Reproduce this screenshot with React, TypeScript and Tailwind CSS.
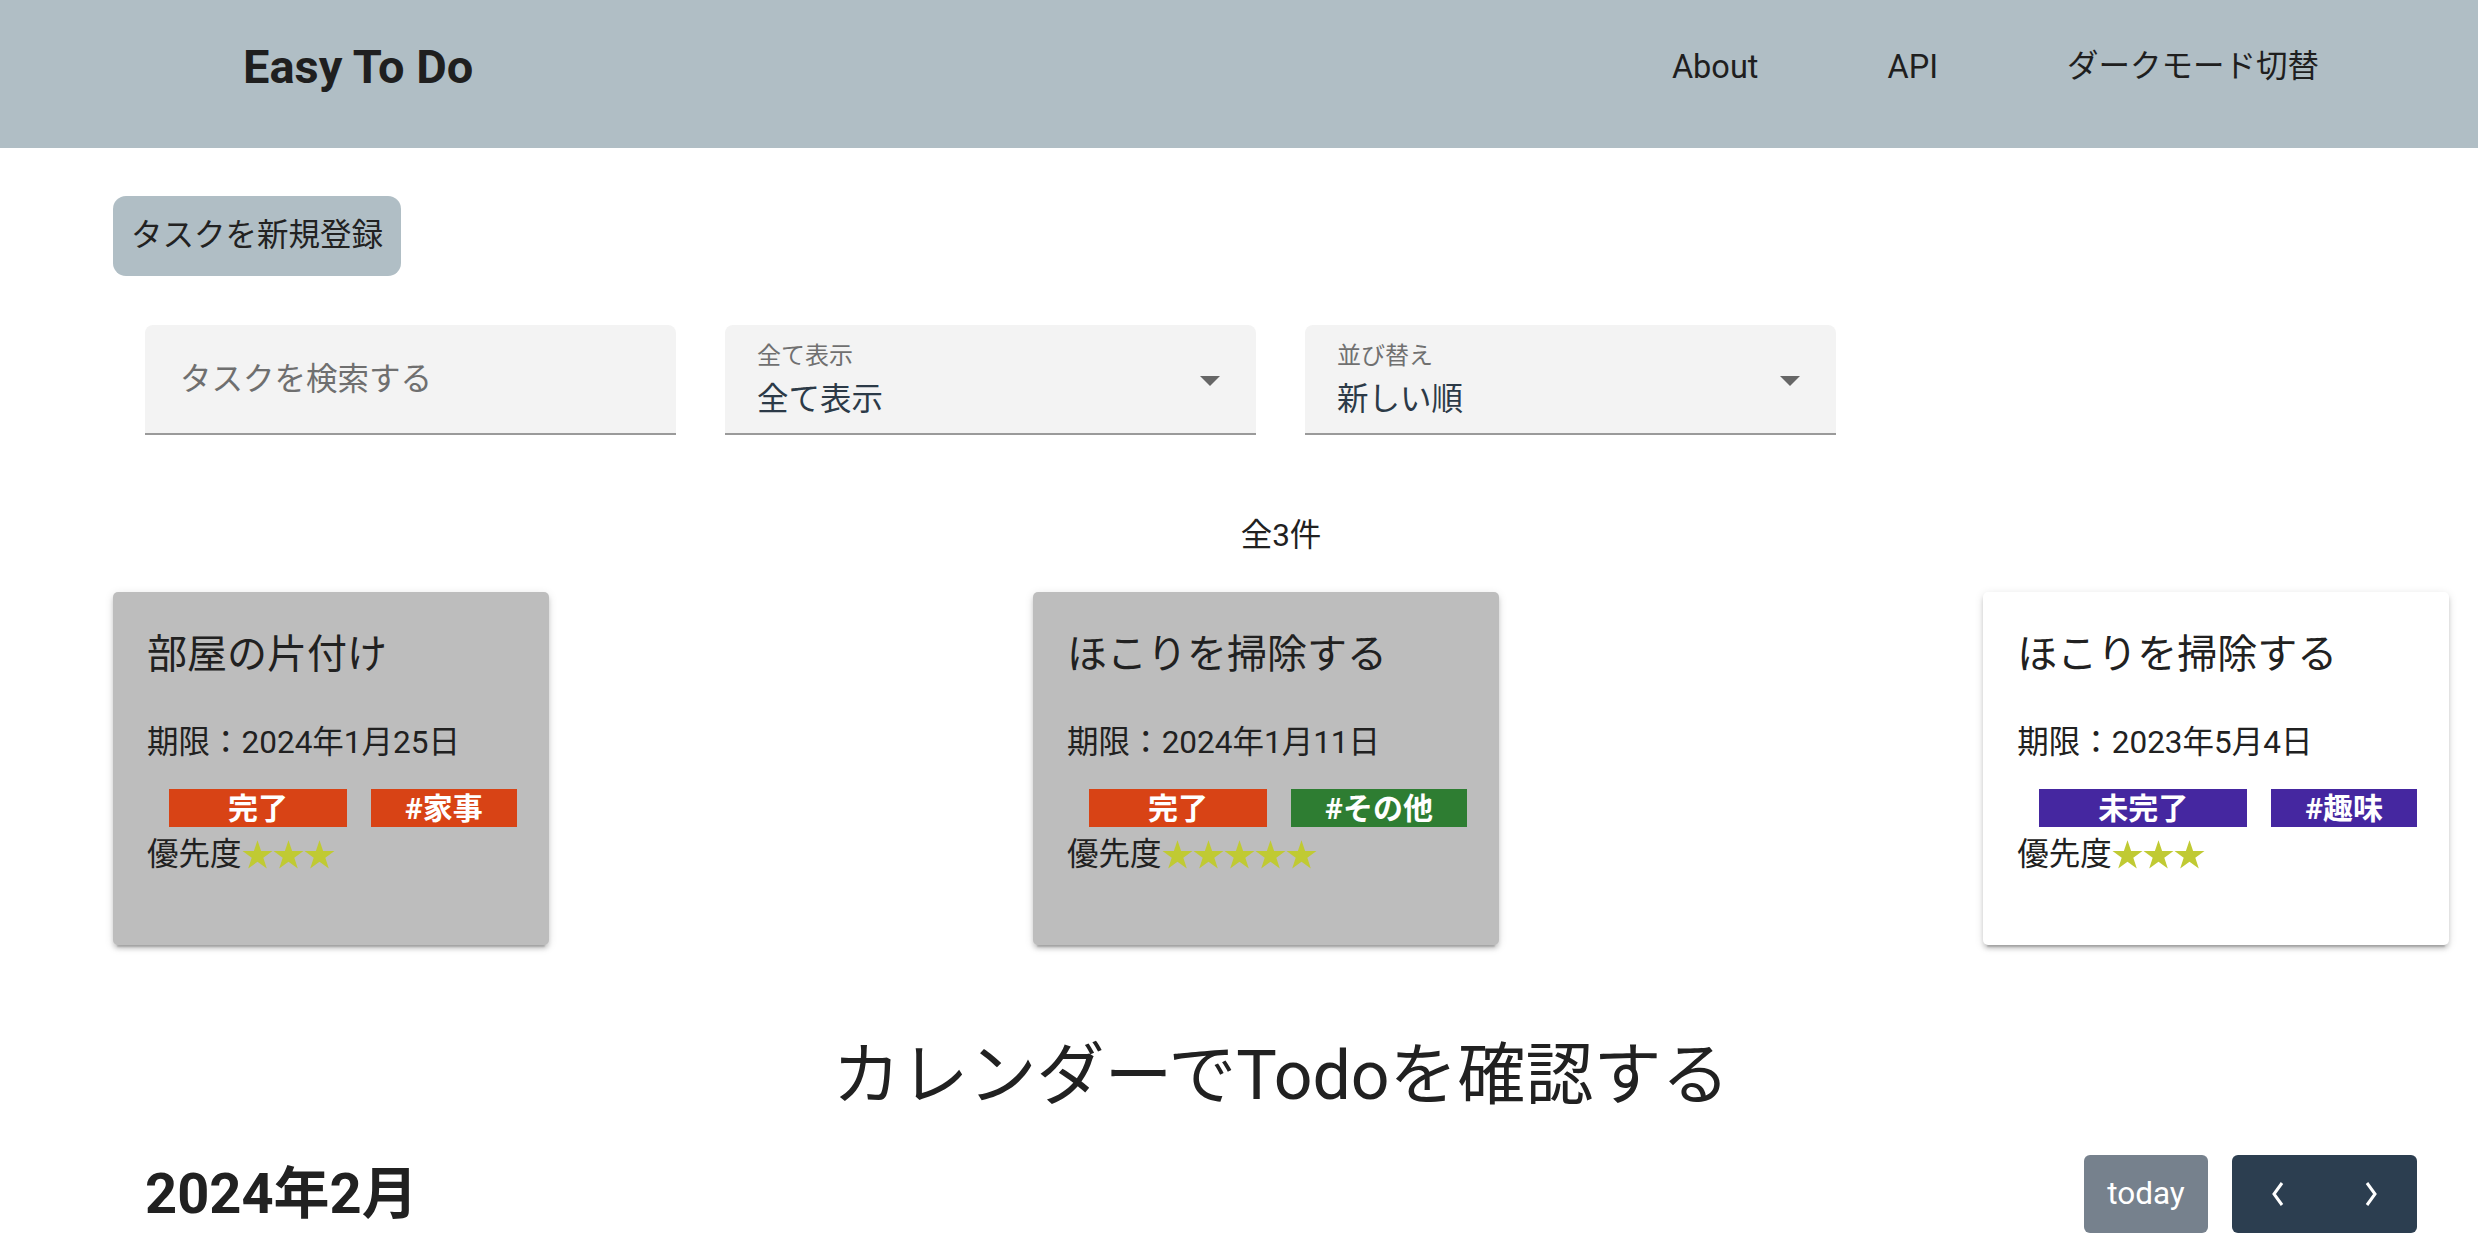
import { useState } from "react";

type Todo = {
  title: string;
  deadline: string;
  done: boolean;
  tag: string;
  tagColor: string;
  priority: number;
};

const todos: Todo[] = [
  { title: "部屋の片付け", deadline: "2024年1月25日", done: true, tag: "#家事", tagColor: "bg-[#d84315]", priority: 3 },
  { title: "ほこりを掃除する", deadline: "2024年1月11日", done: true, tag: "#その他", tagColor: "bg-[#2e7d32]", priority: 5 },
  { title: "ほこりを掃除する", deadline: "2023年5月4日", done: false, tag: "#趣味", tagColor: "bg-[#4527a0]", priority: 3 },
];

function Star() {
  return (
    <svg width="31" height="30" viewBox="0 0 24 23" className="fill-[#c0ca33]">
      <polygon points="12,0 14.8,8.4 23.6,8.4 16.5,13.6 19.2,22 12,16.8 4.8,22 7.5,13.6 0.4,8.4 9.2,8.4" />
    </svg>
  );
}

function TodoCard({ todo }: { todo: Todo }) {
  return (
    <div
      className={`rounded-[5px] pl-[34px] pr-[32px] pt-[33px] pb-[66px] shadow-[0_6px_2px_-4px_rgba(0,0,0,0.2),0_4px_4px_0_rgba(0,0,0,0.14),0_2px_10px_0_rgba(0,0,0,0.12)] ${
        todo.done ? "bg-[#bdbdbd]" : "bg-white"
      }`}
    >
      <div className="text-[40px] leading-[60px] whitespace-nowrap">{todo.title}</div>
      <div className="mt-[34px] text-[31.5px] leading-[48px] whitespace-nowrap">期限：{todo.deadline}</div>
      <div className="mt-[22px] flex h-[38px]">
        <span
          className={`ml-[22px] flex h-[38px] items-center px-[59px] text-[30px] font-bold text-white whitespace-nowrap ${
            todo.done ? "bg-[#d84315]" : "bg-[#4527a0]"
          }`}
        >
          {todo.done ? "完了" : "未完了"}
        </span>
        <span className={`ml-[24px] flex h-[38px] items-center px-[34px] text-[30px] font-bold text-white whitespace-nowrap ${todo.tagColor}`}>
          {todo.tag}
        </span>
      </div>
      <div className="mt-[4px] flex items-center text-[31.5px] leading-[48px]">
        <span>優先度</span>
        {Array.from({ length: todo.priority }).map((_, i) => (
          <Star key={i} />
        ))}
      </div>
    </div>
  );
}

function SelectField({ label, value }: { label: string; value: string }) {
  return (
    <div className="relative h-[110px] w-[531px] rounded-t-lg border-b-2 border-[#9a9a9a] bg-[#f3f3f3] pl-[32px]">
      <div className="pt-[16px] text-[24px] leading-[30px] text-[#707070]">{label}</div>
      <div className="mt-[5px] text-[31.5px] leading-[48px] text-[#2c3a47]">{value}</div>
      {/* dropdown arrow */}
      <svg width="20" height="10" viewBox="0 0 20 10" className="absolute right-[36px] top-[51px] fill-[#666]">
        <polygon points="0,0 20,0 10,10" />
      </svg>
    </div>
  );
}

export default function App() {
  const [query, setQuery] = useState("");

  return (
    <div className="min-h-screen bg-white font-[Roboto,'Noto_Sans_CJK_JP',sans-serif] text-[#212121]">
      <header className="flex h-[148px] items-center justify-between bg-[#b0bec5] pb-[14px] pl-[243px] pr-[159px]">
        <h1 className="text-[47px] font-bold leading-[70px] text-[#1f1f1f]">Easy To Do</h1>
        <nav className="flex items-center gap-[129px] leading-[48px] text-[#1f1f1f]">
          <a href="#about" className="text-[32.5px]">About</a>
          <a href="#api" className="text-[32.5px]">API</a>
          <button className="cursor-pointer text-[31.5px]">ダークモード切替</button>
        </nav>
      </header>

      <main className="ml-[113px] mr-[29px]">
        <button className="mt-[48px] h-[80px] cursor-pointer rounded-[13px] bg-[#b0bec5] px-[18px] text-[31.5px] text-[#222]">
          タスクを新規登録
        </button>

        <div className="mt-[49px] flex gap-[49px] pl-[32px]">
          <div className="h-[110px] w-[531px] rounded-t-lg border-b-2 border-[#9a9a9a] bg-[#f3f3f3] pl-[35px]">
            <input
              value={query}
              onChange={(e) => setQuery(e.target.value)}
              placeholder="タスクを検索する"
              className="mt-[30px] h-[48px] w-full bg-transparent text-[31.5px] outline-none placeholder:text-[#6f6f6f]"
            />
          </div>
          <SelectField label="全て表示" value="全て表示" />
          <SelectField label="並び替え" value="新しい順" />
        </div>

        <p className="mt-[77px] text-center text-[31.5px] leading-[48px]">全3件</p>

        <div className="mt-[32px] flex items-start justify-between">
          {todos.map((t, i) => (
            <TodoCard key={i} todo={t} />
          ))}
        </div>

        <h2 className="mt-[80px] text-center text-[68px] leading-[102px]">カレンダーでTodoを確認する</h2>

        <div className="mt-[28px] flex h-[78px] items-center justify-between px-[32px]">
          <h3 className="text-[56px] font-bold">2024年2月</h3>
          <div className="flex gap-[24px]">
            <button className="h-[78px] w-[124px] rounded-[6px] bg-[#76818d] text-[31.5px] text-white">today</button>
            <div className="flex">
              <button className="flex h-[78px] w-[92px] items-center justify-center rounded-l-[6px] bg-[#2c3e50]">
                <svg width="16" height="28" viewBox="0 0 16 28" fill="none" stroke="white" strokeWidth="3">
                  <polyline points="12,3 4,14 12,25" />
                </svg>
              </button>
              <button className="flex h-[78px] w-[93px] items-center justify-center rounded-r-[6px] bg-[#2c3e50]">
                <svg width="16" height="28" viewBox="0 0 16 28" fill="none" stroke="white" strokeWidth="3">
                  <polyline points="4,3 12,14 4,25" />
                </svg>
              </button>
            </div>
          </div>
        </div>
      </main>
    </div>
  );
}
